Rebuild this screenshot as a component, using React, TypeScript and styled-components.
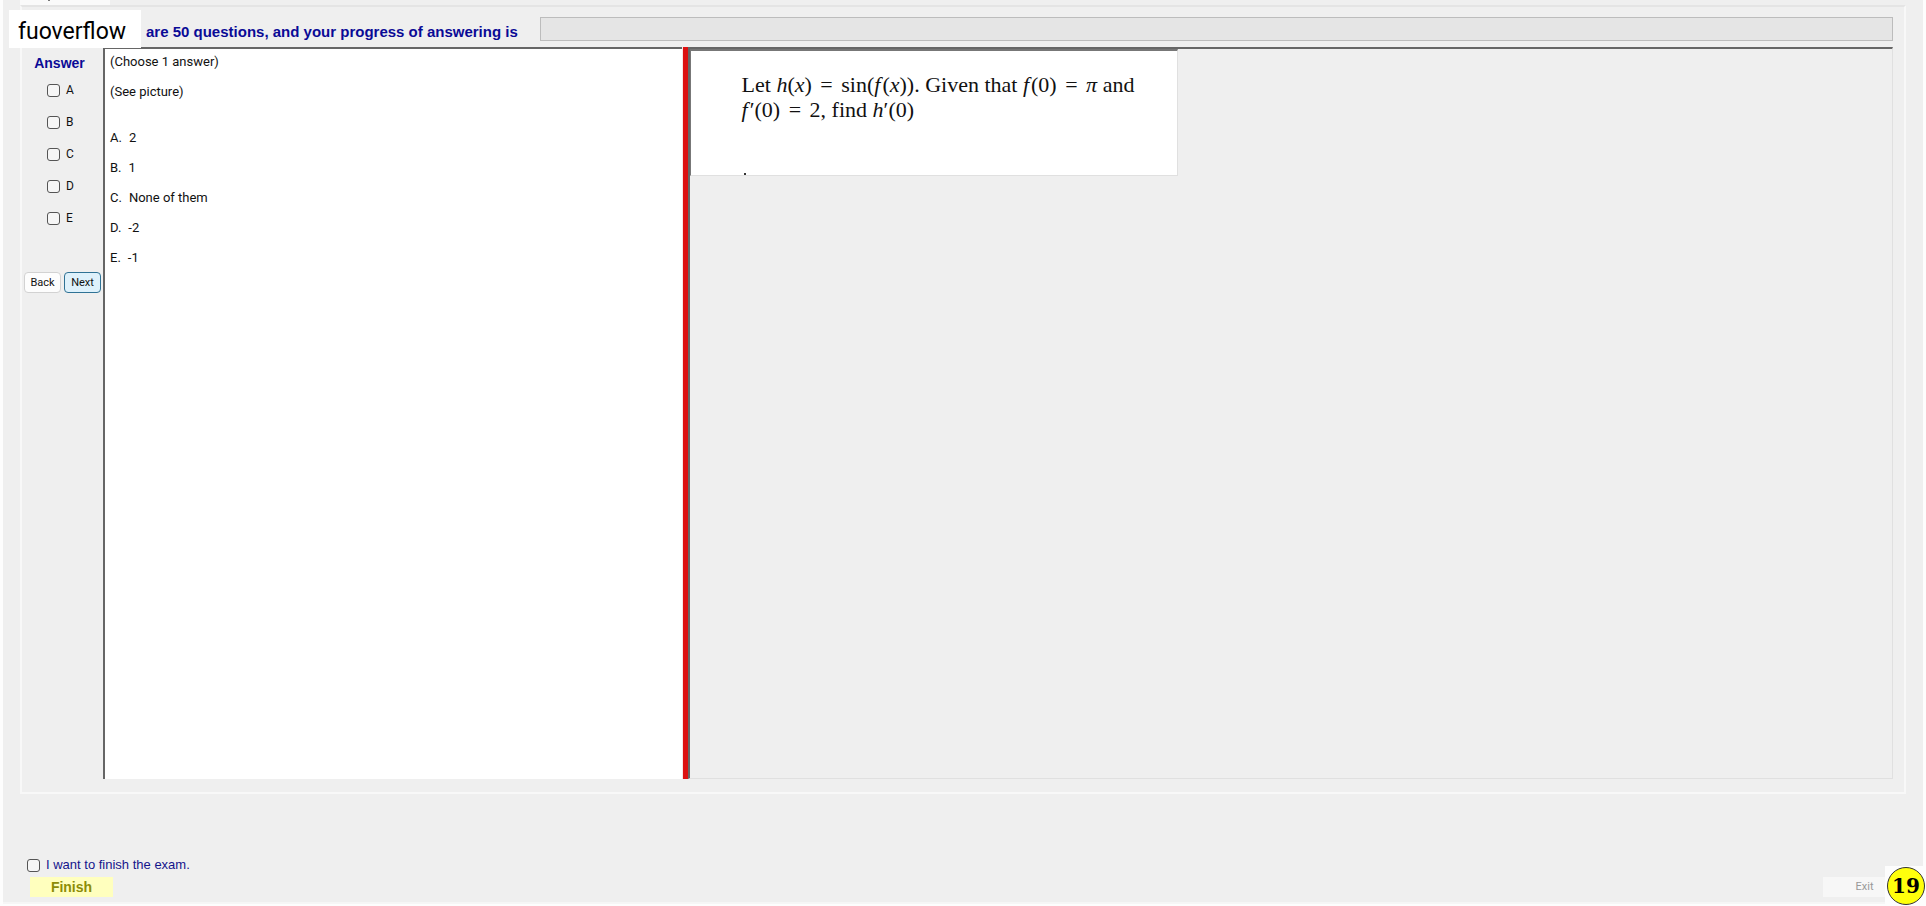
import React, { useState } from "react";
import styled, { createGlobalStyle } from "styled-components";

const GlobalStyle = createGlobalStyle`
  *, *::before, *::after { box-sizing: border-box; }
  body { margin: 0; background: #fdfdfd; font-family: Roboto, "Liberation Sans", sans-serif; color: #111; }
`;

const Page = styled.div`
  position: relative;
  display: flex;
  min-height: 100vh;
  padding: 0 3px 2px;
`;

const Window = styled.main`
  flex: 1;
  min-width: 0;
  display: flex;
  flex-direction: column;
  background: #efefef;
  border-bottom: 2px solid #f6f6f6;
`;

const TabStrip = styled.div`
  height: 5px;
  padding-left: 17px;
`;

const Tab = styled.div`
  width: 90px;
  height: 6px;
  padding-left: 28px;
  background: #fafafa;
  &::before {
    content: "";
    display: block;
    width: 2px;
    height: 1px;
    background: #777;
  }
`;

const Group = styled.section`
  flex: 1;
  display: flex;
  flex-direction: column;
  margin: 0 17px;
  padding: 10px 11px 13px 0;
  border: 2px solid #f8f8f8;
  border-top-color: #e4e4e4;
`;

const Header = styled.header`
  display: flex;
  gap: 22px;
  margin-bottom: 6px;
  padding-left: 124px;
`;

const Heading = styled.h1`
  margin: 0;
  padding-top: 6px;
  font: bold 15px/18px "Liberation Sans", Arial, sans-serif;
  color: #0a0a96;
  white-space: nowrap;
`;

const Progress = styled.progress`
  appearance: none;
  flex: 1;
  min-width: 0;
  height: 24px;
  border: 1px solid #bcbcbc;
  background: #e5e5e5;
  &::-webkit-progress-bar { background: #e5e5e5; }
  &::-webkit-progress-value { background: #06b025; }
`;

const Workspace = styled.div`
  flex: 1;
  display: grid;
  grid-template-columns: 81px minmax(0, 12fr) 6px minmax(0, 25fr);
`;

const AnswerColumn = styled.fieldset`
  display: flex;
  flex-direction: column;
  min-width: 0;
  margin: 0;
  padding: 0;
  border: 0;
`;

const AnswerTitle = styled.h2`
  margin: 7px 0 2px;
  padding-right: 6px;
  text-align: center;
  font: bold 14px/18px "Liberation Sans", Arial, sans-serif;
  color: #0a0a96;
`;

const Choice = styled.label`
  display: flex;
  align-items: center;
  gap: 6px;
  height: 32px;
  padding-left: 25px;
  font-size: 12px;
`;

const CheckBox = styled.input`
  appearance: none;
  flex: none;
  width: 13px;
  height: 13px;
  margin: 0;
  border: 1px solid #555;
  border-radius: 3px;
  background: #f6f6f6;
  &:checked { background: #0067c0; }
`;

const NavButtons = styled.div`
  display: flex;
  gap: 3px;
  margin: 38px 2px 0;
`;

const NavButton = styled.button<{ $active?: boolean }>`
  flex: 1;
  height: 21px;
  padding: 0;
  border: 1px solid ${(p) => (p.$active ? "#2f7295" : "#d2d2d2")};
  border-radius: 4px;
  background: ${(p) => (p.$active ? "#def1fb" : "#fdfdfd")};
  color: #111;
  font: 11px/19px Roboto, sans-serif;
`;

const QuestionPanel = styled.article`
  padding: 0 5px;
  border: solid #666;
  border-width: 2px 0 0 2px;
  background: #fff;
  font-size: 13px;
  line-height: 30px;
`;

const QuestionText = styled.div`
  margin-top: -2px;
  p { margin: 0; }
`;

const ChoiceList = styled.ol`
  margin: 16px 0 0;
  padding: 0;
  list-style: none;
`;

const ChoiceItem = styled.li`
  display: flex;
  gap: 7px;
`;

const Splitter = styled.div`
  border-left: 1px solid #f9e4e4;
  background: #dc1010;
`;

const PicturePanel = styled.div`
  border: solid #666;
  border-width: 2px 1px 1px 2px;
  border-right-color: #e0e0e0;
  border-bottom-color: #e0e0e0;
`;

const Picture = styled.figure`
  display: flex;
  flex-direction: column;
  justify-content: space-between;
  width: 488px;
  max-width: 100%;
  height: 127px;
  margin: 0;
  padding: 21px 0 0 51px;
  border: solid #777;
  border-width: 2px 1px 1px 1px;
  border-right-color: #e0e0e0;
  border-bottom-color: #e0e0e0;
  background: #fff;
`;

const Formula = styled.p`
  margin: 0;
  font: 22px/25px "Liberation Serif", "Times New Roman", serif;
  white-space: nowrap;
`;

const Relation = styled.span`
  margin: 0 3px;
`;

const Func = styled.i`
  margin-right: 2px;
`;

const PictureDot = styled.span`
  width: 2px;
  height: 2px;
  margin-left: 2px;
  background: #333;
`;

const Footer = styled.footer`
  padding: 61px 17px 5px 24px;
`;

const FinishLabel = styled.label`
  display: flex;
  align-items: center;
  gap: 6px;
  height: 20px;
  margin-bottom: 2px;
  font: 13px/20px "Liberation Sans", Arial, sans-serif;
  color: #14148c;
`;

const FooterRow = styled.div`
  display: flex;
  justify-content: space-between;
  padding-left: 3px;
`;

const FooterButton = styled.button<{ $primary?: boolean }>`
  width: 83px;
  height: 20px;
  padding: 0;
  border: 0;
  background: ${(p) => (p.$primary ? "#ffffbe" : "#f7f7f7")};
  color: ${(p) => (p.$primary ? "#8c8c08" : "#999")};
  font: ${(p) =>
    p.$primary ? 'bold 14px/20px "Liberation Sans", sans-serif' : "11px/20px Roboto, sans-serif"};
`;

const Watermark = styled.div`
  position: absolute;
  top: 10px;
  left: 9px;
  width: 132px;
  height: 38px;
  padding-left: 9px;
  background: #fff;
  color: #000;
  font-size: 23px;
  line-height: 44px;
`;

const Badge = styled.div`
  position: absolute;
  right: 0;
  bottom: 0;
  padding: 1px 1px 1px 2px;
  background: #fdfdfd;
  span {
    display: block;
    width: 38px;
    height: 38px;
    border: 1px solid #333;
    border-radius: 50%;
    background: #ffff0c;
    color: #000;
    text-align: center;
    font: bold 20px/36px "DejaVu Serif", serif;
  }
`;

const letters = ["A", "B", "C", "D", "E"];
const options = ["2", "1", "None of them", "-2", "-1"];

export default function App() {
  const [checked, setChecked] = useState<Record<string, boolean>>({});
  const toggle = (key: string) => setChecked((c) => ({ ...c, [key]: !c[key] }));

  return (
    <Page>
      <GlobalStyle />
      <Window>
        <TabStrip>
          <Tab />
        </TabStrip>
        <Group>
          <Header>
            <Heading>are 50 questions, and your progress of answering is</Heading>
            <Progress value={0} max={50} aria-label="Progress of answering" />
          </Header>
          <Workspace>
            <AnswerColumn>
              <AnswerTitle>Answer</AnswerTitle>
              {letters.map((l) => (
                <Choice key={l}>
                  <CheckBox type="checkbox" checked={!!checked[l]} onChange={() => toggle(l)} />
                  {l}
                </Choice>
              ))}
              <NavButtons>
                <NavButton type="button">Back</NavButton>
                <NavButton type="button" $active>Next</NavButton>
              </NavButtons>
            </AnswerColumn>
            <QuestionPanel>
              <QuestionText>
                <p>(Choose 1 answer)</p>
                <p>(See picture)</p>
                <ChoiceList>
                  {options.map((o, i) => (
                    <ChoiceItem key={o}>
                      <span>{letters[i]}.</span>
                      <span>{o}</span>
                    </ChoiceItem>
                  ))}
                </ChoiceList>
              </QuestionText>
            </QuestionPanel>
            <Splitter />
            <PicturePanel>
              <Picture>
                <Formula>
                  Let <i>h</i>(<i>x</i>) <Relation>=</Relation> sin(<Func>f</Func>(<i>x</i>)). Given that{" "}
                  <Func>f</Func>(0) <Relation>=</Relation> <i>π</i> and
                  <br />
                  <Func>f</Func>′(0) <Relation>=</Relation> 2, find <i>h</i>′(0)
                </Formula>
                <PictureDot />
              </Picture>
            </PicturePanel>
          </Workspace>
        </Group>
        <Footer>
          <FinishLabel>
            <CheckBox type="checkbox" checked={!!checked.finish} onChange={() => toggle("finish")} />
            I want to finish the exam.
          </FinishLabel>
          <FooterRow>
            <FooterButton type="button" $primary>Finish</FooterButton>
            <FooterButton type="button" disabled>Exit</FooterButton>
          </FooterRow>
        </Footer>
      </Window>
      <Watermark>fuoverflow</Watermark>
      <Badge>
        <span>19</span>
      </Badge>
    </Page>
  );
}
